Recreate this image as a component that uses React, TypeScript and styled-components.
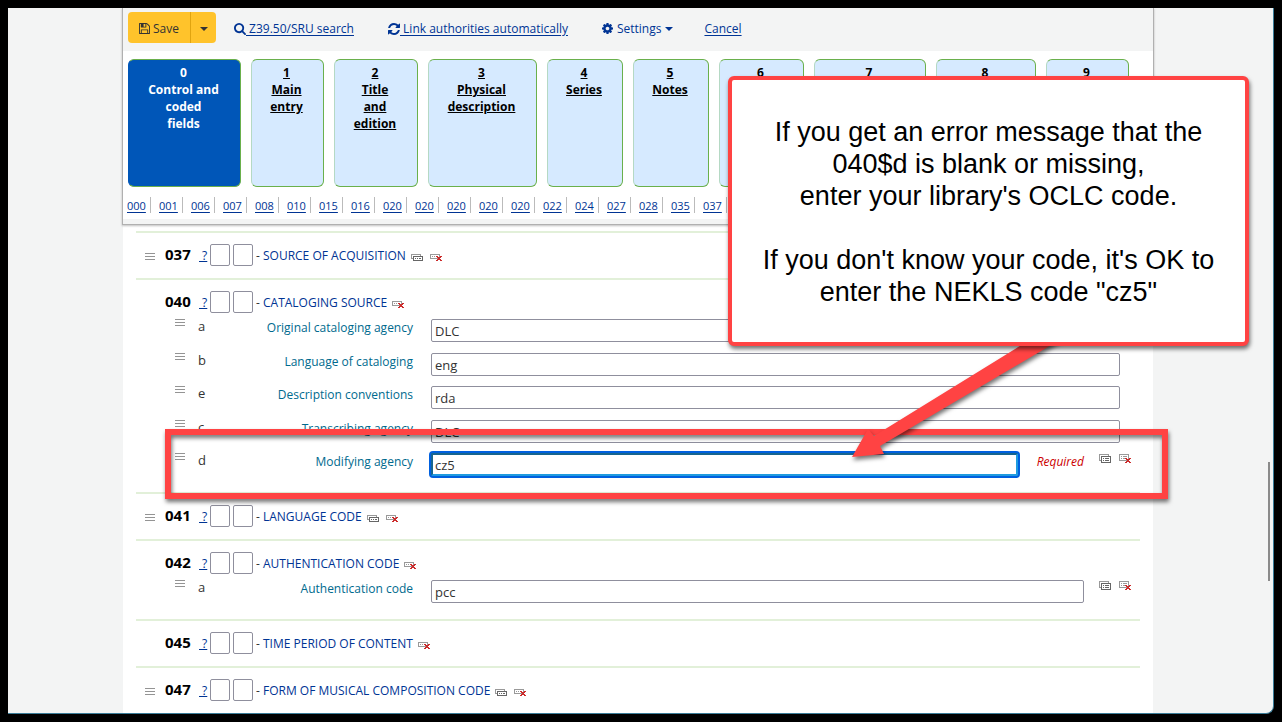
import React from "react";
import styled, { createGlobalStyle, css } from "styled-components";

const GlobalStyle = createGlobalStyle`
  *, *::before, *::after { box-sizing: border-box; }
  body {
    margin: 0;
    background: #000;
    color: #333;
    font-family: "Open Sans", "Noto Sans", sans-serif;
    font-size: 12px;
    line-height: 16px;
  }
`;

const Frame = styled.div`
  position: relative;
  min-height: 100vh;
  padding: 8px;
  background: #000;
`;

const Viewport = styled.div`
  position: relative;
  padding: 0 120px 0 115px;
  background: #f3f4f4;
  border-right: 1px solid #3a7c98;
  border-bottom: 1px solid #3a7c98;
  border-bottom-right-radius: 8px;
`;

const ScrollThumb = styled.div`
  position: absolute;
  top: 454px;
  right: 3px;
  width: 2px;
  height: 119px;
  background: #8a8a8a;
`;

const Main = styled.main`
  background: #fff;
`;

const StickyHeader = styled.header`
  margin: 0 -1px;
  padding-bottom: 5px;
  background: #f3f4f4;
  border: 1px solid #b0b0b0;
  border-top: 0;
  box-shadow: 0 1px 2px rgba(0, 0, 0, 0.25);
`;

const Toolbar = styled.div`
  display: flex;
  align-items: center;
  height: 43px;
  padding: 0 5px 4px;
`;

const ButtonGroup = styled.div`
  display: flex;
  height: 31px;
  margin-right: 18px;
`;

const SaveButton = styled.button<{ $split?: boolean }>`
  display: flex;
  align-items: center;
  justify-content: center;
  gap: 3px;
  width: ${(p) => (p.$split ? "25px" : "63px")};
  padding: 2px 0 0;
  border: 0;
  border-right: ${(p) => (p.$split ? "0" : "1px solid #e0a410")};
  border-radius: ${(p) => (p.$split ? "0 4px 4px 0" : "4px 0 0 4px")};
  background: #ffc32b;
  color: #333;
  font: inherit;
`;

const toolStyles = css`
  display: flex;
  align-items: center;
  padding: 2px 0 0;
  border: 0;
  background: none;
  color: #003494;
  font: inherit;
  white-space: pre;
`;

const ToolLink = styled.a`
  ${toolStyles}
  margin-right: 34px;
  text-decoration: none;
  span { text-decoration: underline; text-underline-offset: 2px; }
`;

const ToolButton = styled.button`
  ${toolStyles}
  gap: 4px;
  margin-right: 31px;
`;

const HeaderBody = styled.div`
  background: #fff;
  padding: 8px 24px 3px 5px;
`;

const Tabs = styled.nav`
  display: flex;
  gap: 10px;
`;

const Tab = styled.a<{ $size: number; $active?: boolean }>`
  flex: ${(p) => p.$size} 1 ${(p) => p.$size}px;
  display: flex;
  flex-direction: column;
  height: 128px;
  padding: 4px 6px 0 4px;
  border: 1px solid #6ab04c;
  border-left-color: ${(p) => (p.$active ? "#0056b8" : "#b5d9c4")};
  border-radius: 6px;
  background: ${(p) => (p.$active ? "#0056b8" : "#d6eaff")};
  color: ${(p) => (p.$active ? "#fff" : "#000")};
  font-size: 12px;
  font-weight: 700;
  line-height: 17px;
  text-align: center;
  text-decoration: ${(p) => (p.$active ? "none" : "underline")};
`;

const TagLinks = styled.ul`
  display: flex;
  height: 29px;
  margin: 0 0 0 -1px;
  padding: 10px 0 0;
  overflow: hidden;
  list-style: none;
  li {
    flex: none;
    width: 24px;
    height: 16px;
    margin-right: 8px;
    border-right: 1px solid #bbb;
    line-height: 17px;
  }
  a { color: #003494; font-size: 11px; text-underline-offset: 2px; }
`;

const Record = styled.form`
  padding: 6px 13px 0;
`;

const Field = styled.section<{ $open: boolean }>`
  padding: 11px 0 ${(p) => (p.$open ? "16px" : "12px")};
  border-top: 2px solid #e2f0d9;
`;

const FieldHead = styled.div`
  display: flex;
  align-items: center;
  height: 22px;
  padding-left: 9px;
`;

const GripSlot = styled.span`
  display: flex;
  width: 20px;
  padding-top: 4px;
`;

const Tag = styled.strong`
  width: 34px;
  padding-bottom: 2px;
  color: #000;
  font-size: 15px;
`;

const Help = styled.a`
  width: 11px;
  padding-top: 2px;
  color: #003494;
  white-space: pre;
`;

const Indicator = styled.input`
  width: 20px;
  height: 22px;
  margin-right: 3px;
  padding: 0;
  border: 1px solid #8f8f9d;
  border-radius: 2px;
  background: #fff;
`;

const FieldTitle = styled.span`
  padding-top: 2px;
  a { color: #003494; text-decoration: none; }
`;

const IconButton = styled.button`
  display: flex;
  padding: 0;
  border: 0;
  background: none;
`;

const HeadTools = styled.span`
  display: flex;
  gap: 7px;
  margin-left: 5px;
  padding-top: 4px;
`;

const Subfields = styled.div<{ $minHeight: number }>`
  display: flex;
  flex-direction: column;
  justify-content: space-between;
  min-height: ${(p) => p.$minHeight}px;
  margin-top: 6px;
`;

const Subfield = styled.div`
  display: flex;
  height: 23px;
  padding: 0 9px 0 39px;
`;

const SubGrip = styled.span`
  display: flex;
  width: 23px;
`;

const Code = styled.span`
  width: 30px;
  font-size: 13px;
  line-height: 14px;
`;

const SubLabel = styled.label`
  width: 185px;
  margin-right: 18px;
  color: #006a8e;
  text-align: right;
  line-height: 18px;
`;

const Value = styled.input<{ $focused?: boolean; $wide?: boolean }>`
  flex: 1;
  min-width: 0;
  height: 23px;
  margin-right: ${(p) => (p.$wide ? "11px" : "0")};
  padding: 1px 3px 0;
  border: 1px solid #8f8f9d;
  border-radius: 2px;
  background: #fff;
  color: #333;
  font: inherit;
  font-size: 13px;
  outline: none;
  ${(p) =>
    p.$focused &&
    css`
      border: 2px solid #1f9bdf;
      border-top-color: #17658f;
      border-left-color: #17658f;
      padding: 1px 2px 0;
      box-shadow: 0 0 0 2px #0060df;
    `}
`;

const Required = styled.em`
  margin-left: 19px;
  color: #c00;
  line-height: 18px;
`;

const SubTools = styled.span`
  display: flex;
  align-items: flex-start;
  gap: 8px;
  margin-left: 15px;
  padding-top: 1px;
`;

const Highlight = styled.div`
  position: absolute;
  top: 429px;
  left: 165px;
  right: 114px;
  height: 70px;
  border: 6px solid #ff4343;
  filter: drop-shadow(1px 3px 2px rgba(0, 0, 0, 0.55));
  pointer-events: none;
`;

const Arrow = styled.svg`
  position: absolute;
  top: 330px;
  right: 212px;
  overflow: visible;
  filter: drop-shadow(1px 3px 2px rgba(0, 0, 0, 0.55));
  pointer-events: none;
`;

const Callout = styled.aside`
  position: absolute;
  top: 76px;
  right: 33px;
  width: 521px;
  height: 270px;
  padding-top: 36px;
  border: 4px solid #ff4343;
  border-radius: 6px;
  background: #fff;
  box-shadow: 1px 3px 4px rgba(0, 0, 0, 0.55);
  color: #000;
  font: 27px/32px "Liberation Sans", Arial, sans-serif;
  text-align: center;
  p { margin: 0 0 32px; }
`;

const SaveIcon = () => (
  <svg width="11" height="11" viewBox="0 128 1536 1536" fill="currentColor" aria-hidden>
    <path d="M384 1536h768v-384h-768v384zm896 0h128v-896q0-14-10-38.5t-20-34.5l-281-281q-10-10-34-20t-39-10v416q0 40-28 68t-68 28h-576q-40 0-68-28t-28-68v-416h-128v1280h128v-416q0-40 28-68t68-28h832q40 0 68 28t28 68v416zm-384-928v-320q0-13-9.5-22.5t-22.5-9.5h-192q-13 0-22.5 9.5t-9.5 22.5v320q0 13 9.5 22.5t22.5 9.5h192q13 0 22.5-9.5t9.5-22.5zm640 32v928q0 40-28 68t-68 28h-1344q-40 0-68-28t-28-68v-1344q0-40 28-68t68-28h928q40 0 88 20t76 48l280 280q28 28 48 76t20 88z" />
  </svg>
);

const SearchIcon = () => (
  <svg width="12" height="12" viewBox="64 128 1664 1664" fill="currentColor" aria-hidden>
    <path d="M1216 832q0-185-131.5-316.5t-316.5-131.5-316.5 131.5-131.5 316.5 131.5 316.5 316.5 131.5 316.5-131.5 131.5-316.5zm512 832q0 52-38 90t-90 38q-54 0-90-38l-343-342q-179 124-399 124-143 0-273.5-55.5t-225-150-150-225-55.5-273.5 55.5-273.5 150-225 225-150 273.5-55.5 273.5 55.5 225 150 150 225 55.5 273.5q0 220-124 399l343 343q37 37 37 90z" />
  </svg>
);

const RefreshIcon = () => (
  <svg width="12" height="12" viewBox="128 128 1536 1536" fill="currentColor" aria-hidden>
    <path d="M1639 1056q0 5-1 7-64 268-268 434.5t-478 166.5q-146 0-282.5-55t-243.5-157l-129 129q-19 19-45 19t-45-19-19-45v-448q0-26 19-45t45-19h448q26 0 45 19t19 45-19 45l-137 137q71 66 161 102t187 36q134 0 250-65t186-179q11-17 53-117 8-23 30-23h192q13 0 22.5 9.5t9.5 22.5zm25-800v448q0 26-19 45t-45 19h-448q-26 0-45-19t-19-45 19-45l138-138q-148-137-349-137-134 0-250 65t-186 179q-11 17-53 117-8 23-30 23h-199q-13 0-22.5-9.5t-9.5-22.5v-7q65-268 270-434.5t480-166.5q146 0 284 55.5t245 156.5l130-129q19-19 45-19t45 19 19 45z" />
  </svg>
);

const CogIcon = () => (
  <svg width="11" height="11" viewBox="128 128 1536 1536" fill="currentColor" aria-hidden>
    <path d="M1152 896q0-106-75-181t-181-75-181 75-75 181 75 181 181 75 181-75 75-181zm512-109v222q0 12-8 23t-20 13l-185 28q-19 54-39 91 35 50 107 138 10 12 10 25t-9 23q-27 37-99 108t-94 71q-12 0-26-9l-138-108q-44 23-91 38-16 136-29 186-7 28-36 28h-222q-14 0-24.5-8.5t-11.5-21.5l-28-184q-49-16-90-37l-141 107q-10 9-25 9-14 0-25-11-126-114-165-168-7-10-7-23 0-12 8-23 15-21 51-66.5t54-70.5q-27-50-41-99l-183-27q-13-2-21-12.5t-8-23.5v-222q0-12 8-23t19-13l186-28q14-46 39-92-40-57-107-138-10-12-10-24 0-10 9-23 26-36 98.5-107.5t94.5-71.5q13 0 26 10l138 107q44-23 91-38 16-136 29-186 7-28 36-28h222q14 0 24.5 8.5t11.5 21.5l28 184q49 16 90 37l142-107q9-9 24-9 13 0 25 10 129 119 165 170 7 8 7 22 0 12-8 23-15 21-51 66.5t-54 70.5q26 50 41 98l183 28q13 2 21 12.5t8 23.5z" />
  </svg>
);

const Caret = () => (
  <svg width="8" height="4" viewBox="0 0 8 4" fill="currentColor" aria-hidden>
    <path d="M0 0h8L4 4z" />
  </svg>
);

const Grip = () => (
  <svg width="10" height="8" viewBox="0 0 10 8" fill="#949494" shapeRendering="crispEdges" aria-hidden>
    <path d="M0 0h10v1H0zM0 3h10v1H0zM0 6h10v1H0z" />
  </svg>
);

/* tall = the two-line variant used on subfield rows */
const CloneIcon = ({ tall }: { tall?: boolean }) => (
  <svg width="12" height={tall ? 9 : 7} shapeRendering="crispEdges" aria-hidden>
    <path fill="#999" d={tall ? "M0 0h10v2H9V1H1v5h1v1H0z" : "M0 0h10v2H9V1H1v3h1v1H0z"} />
    <path
      fill="#666"
      fillRule="evenodd"
      d={tall ? "M2 2h10v7H2zM3 3v5h8V3zM4 4h1v1H4zM6 4h4v1H6zM4 6h1v1H4zM6 6h4v1H6z" : "M2 2h10v5H2zM3 3v3h8V3zM4 4h1v1H4zM6 4h1v1H6zM8 4h2v1H8z"}
    />
  </svg>
);

const DeleteIcon = ({ tall }: { tall?: boolean }) => (
  <svg width="12" height={tall ? 9 : 7} shapeRendering="crispEdges" aria-hidden>
    <path
      fill="#999"
      fillRule="evenodd"
      d={tall ? "M0 0h10v7H0zM1 1v5h8V1zM2 2h1v1H2zM4 2h4v1H4zM2 4h1v1H2zM4 4h2v1H4z" : "M0 0h10v5H0zM1 1v3h8V1zM2 2h1v1H2zM4 2h1v1H4z"}
    />
    <path
      fill="#cc2b2b"
      transform={tall ? "translate(6 4)" : "translate(6 2)"}
      d="M0 0h2v1h2V0h2v1H5v1H4v1h1v1h1v1H4V4H2v1H0V4h1V3h1V2H1V1H0z"
    />
  </svg>
);

const TABS: { n: string; lines: string[]; size: number }[] = [
  { n: "0", lines: ["Control and", "coded", "fields"], size: 113 },
  { n: "1", lines: ["Main", "entry"], size: 73 },
  { n: "2", lines: ["Title", "and", "edition"], size: 84 },
  { n: "3", lines: ["Physical", "description"], size: 109 },
  { n: "4", lines: ["Series"], size: 76 },
  { n: "5", lines: ["Notes"], size: 76 },
  { n: "6", lines: [], size: 85 },
  { n: "7", lines: [], size: 112 },
  { n: "8", lines: [], size: 100 },
  { n: "9", lines: [], size: 83 },
];

const TAGS = ["000", "001", "006", "007", "008", "010", "015", "016", "020", "020", "020", "020", "020", "022", "024", "027", "028", "035", "037"];

type Sub = { code: string; label: string; value: string; tools?: boolean; required?: boolean };
type FieldData = { tag: string; title: string; repeatable?: boolean; minHeight?: number; subs?: Sub[] };

const FIELDS: FieldData[] = [
  { tag: "037", title: "SOURCE OF ACQUISITION", repeatable: true },
  {
    tag: "040",
    title: "CATALOGING SOURCE",
    minHeight: 157,
    subs: [
      { code: "a", label: "Original cataloging agency", value: "DLC" },
      { code: "b", label: "Language of cataloging", value: "eng" },
      { code: "e", label: "Description conventions", value: "rda" },
      { code: "c", label: "Transcribing agency", value: "DLC" },
      { code: "d", label: "Modifying agency", value: "cz5", tools: true, required: true },
    ],
  },
  { tag: "041", title: "LANGUAGE CODE", repeatable: true },
  {
    tag: "042",
    title: "AUTHENTICATION CODE",
    minHeight: 23,
    subs: [{ code: "a", label: "Authentication code", value: "pcc", tools: true }],
  },
  { tag: "045", title: "TIME PERIOD OF CONTENT" },
  { tag: "047", title: "FORM OF MUSICAL COMPOSITION CODE", repeatable: true },
];

const SubfieldRow = ({ tag, sub }: { tag: string; sub: Sub }) => {
  const id = `tag_${tag}_${sub.code}`;
  return (
    <Subfield>
      <SubGrip><Grip /></SubGrip>
      <Code>{sub.code}</Code>
      <SubLabel htmlFor={id}>{sub.label}</SubLabel>
      <Value id={id} defaultValue={sub.value} $focused={sub.required} $wide={!sub.tools} />
      {sub.required && <Required>Required</Required>}
      {sub.tools && (
        <SubTools>
          <IconButton type="button" aria-label="Repeat subfield"><CloneIcon tall /></IconButton>
          <IconButton type="button" aria-label="Delete subfield"><DeleteIcon tall /></IconButton>
        </SubTools>
      )}
    </Subfield>
  );
};

const FieldBlock = ({ field }: { field: FieldData }) => (
  <Field $open={!!field.subs}>
    <FieldHead>
      <GripSlot>{field.repeatable && <Grip />}</GripSlot>
      <Tag>{field.tag}</Tag>
      <Help href="#">{" ?"}</Help>
      <Indicator aria-label={`${field.tag} indicator 1`} />
      <Indicator aria-label={`${field.tag} indicator 2`} />
      <FieldTitle>- <a href="#">{field.title}</a></FieldTitle>
      <HeadTools>
        {field.repeatable && <IconButton type="button" aria-label="Repeat field"><CloneIcon /></IconButton>}
        <IconButton type="button" aria-label="Delete field"><DeleteIcon /></IconButton>
      </HeadTools>
    </FieldHead>
    {field.subs && (
      <Subfields $minHeight={field.minHeight ?? 23}>
        {field.subs.map((s) => <SubfieldRow key={s.code} tag={field.tag} sub={s} />)}
      </Subfields>
    )}
  </Field>
);

export default function App() {
  return (
    <Frame>
      <GlobalStyle />
      <Viewport>
        <Main>
          <StickyHeader>
            <Toolbar>
              <ButtonGroup>
                <SaveButton type="button"><SaveIcon />Save</SaveButton>
                <SaveButton type="button" $split aria-label="More save options"><Caret /></SaveButton>
              </ButtonGroup>
              <ToolLink href="#"><SearchIcon /><span> Z39.50/SRU search</span></ToolLink>
              <ToolLink href="#"><RefreshIcon /><span> Link authorities automatically</span></ToolLink>
              <ToolButton type="button"><CogIcon />Settings<Caret /></ToolButton>
              <ToolLink href="#"><span>Cancel</span></ToolLink>
            </Toolbar>
            <HeaderBody>
              <Tabs>
                {TABS.map((t, i) => (
                  <Tab key={t.n} href="#" $size={t.size} $active={i === 0}>
                    <span>{t.n}</span>
                    {t.lines.map((l) => <span key={l}>{l}</span>)}
                  </Tab>
                ))}
              </Tabs>
              <TagLinks>
                {TAGS.map((t, i) => <li key={i}><a href="#">{t}</a></li>)}
              </TagLinks>
            </HeaderBody>
          </StickyHeader>
          <Record>
            {FIELDS.map((f) => <FieldBlock key={f.tag} field={f} />)}
          </Record>
        </Main>
        <ScrollThumb />
      </Viewport>
      <Highlight />
      <Arrow width="218" height="130" viewBox="0 0 218 130" aria-hidden>
        <path fill="#ff4343" d="M0 127L16 99L22 106L197 -2L218 4L28 116L32 124Z" />
      </Arrow>
      <Callout>
        <p>If you get an error message that the<br />040$d is blank or missing,<br />enter your library's OCLC code.</p>
        <p>If you don't know your code, it's OK to<br />enter the NEKLS code "cz5"</p>
      </Callout>
    </Frame>
  );
}
